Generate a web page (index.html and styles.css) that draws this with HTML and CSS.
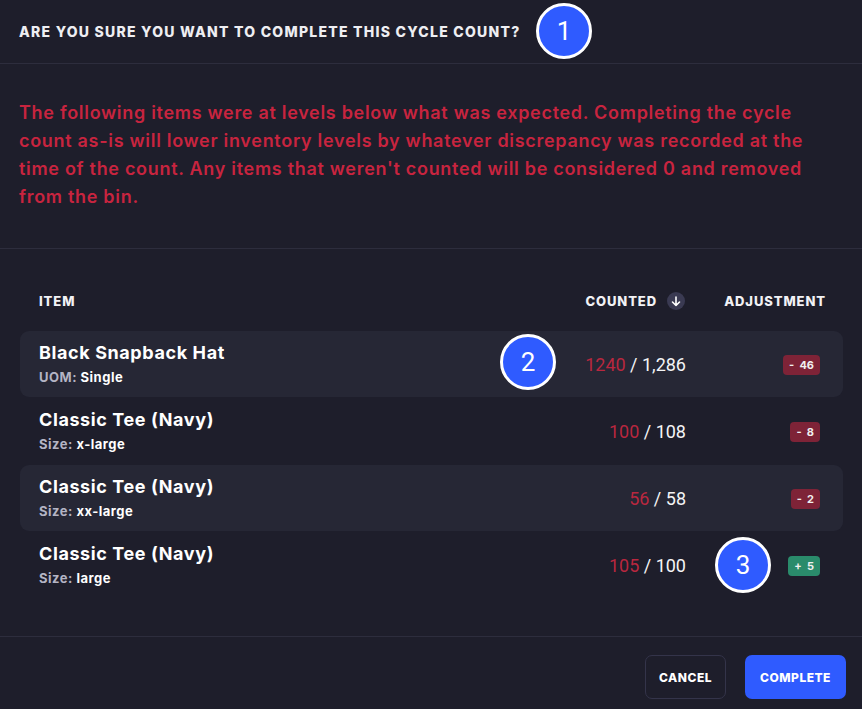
FILE: index.html
```html
<!DOCTYPE html>
<html>
<head>
<meta charset="utf-8">
<link rel="stylesheet" href="styles.css">
</head>
<body>
<div class="modal">
  <div class="header">
    <h1 class="title">Are you sure you want to complete this cycle count?</h1>
    <span class="marker m1">1</span>
  </div>
  <div class="warning">
    <p>The following items were at levels below what was expected. Completing the cycle count as-is will lower inventory levels by whatever discrepancy was recorded at the time of the count. Any items that weren't counted will be considered 0 and removed from the bin.</p>
  </div>
  <div class="table">
    <div class="thead">
      <div class="th item">Item</div>
      <div class="th counted">Counted <span class="sort"><svg width="10" height="11" viewBox="0 0 10 11"><path d="M5 1v8.5M1.5 6L5 9.5 8.5 6" fill="none" stroke="#fff" stroke-width="1.6" stroke-linecap="round" stroke-linejoin="round"/></svg></span></div>
      <div class="th adj">Adjustment</div>
    </div>
    <div class="row alt">
      <div class="item"><div class="name">Black Snapback Hat</div><div class="sub"><span class="lbl">UOM:</span> Single</div></div>
      <div class="counted"><span class="red">1240</span> / 1,286</div>
      <div class="adj"><span class="badge neg">-&nbsp; 46</span></div>
      <span class="marker m2">2</span>
    </div>
    <div class="row">
      <div class="item"><div class="name">Classic Tee (Navy)</div><div class="sub"><span class="lbl">Size:</span> x-large</div></div>
      <div class="counted"><span class="red">100</span> / 108</div>
      <div class="adj"><span class="badge neg">-&nbsp; 8</span></div>
    </div>
    <div class="row alt">
      <div class="item"><div class="name">Classic Tee (Navy)</div><div class="sub"><span class="lbl">Size:</span> xx-large</div></div>
      <div class="counted"><span class="red">56</span> / 58</div>
      <div class="adj"><span class="badge neg">-&nbsp; 2</span></div>
    </div>
    <div class="row">
      <div class="item"><div class="name">Classic Tee (Navy)</div><div class="sub"><span class="lbl">Size:</span> large</div></div>
      <div class="counted"><span class="red">105</span> / 100</div>
      <div class="adj"><span class="badge pos">+&nbsp; 5</span></div>
      <span class="marker m3">3</span>
    </div>
  </div>
  <div class="footer">
    <button class="btn cancel">Cancel</button>
    <button class="btn primary">Complete</button>
  </div>
</div>
</body>
</html>
```
FILE: styles.css
```css
* { box-sizing: border-box; }
html, body { margin: 0; padding: 0; }
body {
  background: #1e1e2b;
  color: #fff;
  font-family: "Inter", "Open Sans", "Liberation Sans", sans-serif;
  width: 862px;
  height: 709px;
  overflow: hidden;
}
.modal { position: relative; }
.header {
  position: relative;
  height: 64px;
  display: flex;
  align-items: center;
  padding: 0 19px;
  border-bottom: 1px solid #2d2d3d;
}
.title {
  margin: 0;
  font-size: 14px;
  font-weight: 800;
  text-transform: uppercase;
  letter-spacing: 1.25px;
  color: #eeeef2;
}
.marker {
  position: absolute;
  width: 56px;
  height: 56px;
  border-radius: 50%;
  background: #2f5bff;
  border: 3px solid #fff;
  color: #fff;
  font-family: "Roboto", "Liberation Sans", sans-serif;
  font-size: 26px;
  display: flex;
  align-items: center;
  justify-content: center;
  z-index: 2;
}
.m1 { left: 536px; top: 3px; }
.m2 { left: 480px; top: 3px; }
.m3 { left: 695px; top: 5px; }
.warning {
  padding: 35px 19px 37px;
  border-bottom: 1px solid #2d2d3d;
}
.warning p {
  margin: 0;
  color: #c8243f;
  font-size: 18px;
  font-weight: 600;
  line-height: 28px;
  letter-spacing: 0.7px;
  max-width: 816px;
}
.table { padding: 40px 19px 37px 20px; }
.thead {
  display: flex;
  align-items: center;
  height: 24px;
  margin-bottom: 18px;
  padding: 0 17px 0 19px;
}
.th {
  font-size: 13px;
  font-weight: 800;
  text-transform: uppercase;
  letter-spacing: 0.9px;
  color: #f2f2f5;
}
.thead .item { flex: 1; }
.thead .counted { display: flex; align-items: center; gap: 10px; }
.sort {
  width: 18px;
  height: 18px;
  border-radius: 50%;
  background: #3a3a52;
  display: flex;
  align-items: center;
  justify-content: center;
}
.thead .adj { width: 141px; text-align: right; }
.row {
  position: relative;
  height: 66px;
  margin-bottom: 1px;
  display: flex;
  align-items: center;
  padding: 0 23px 0 19px;
  border-radius: 9px;
}
.row.alt { background: #262735; }
.row .item { flex: 1; display: flex; flex-direction: column; gap: 4px; }
.name { font-size: 18px; font-weight: 700; line-height: 22px; letter-spacing: 0.6px; color: #fff; }
.sub { font-size: 13px; font-weight: 700; line-height: 18px; letter-spacing: 0.5px; color: #fff; }
.lbl { color: #b4b4c4; }
.row .counted {
  font-family: "Roboto", "Liberation Sans", sans-serif;
  font-size: 18px;
  font-weight: 400;
  color: #f4f4f6;
}
.red { color: #b9273f; }
.row .adj { width: 134px; text-align: right; }
.badge {
  display: inline-block;
  height: 20px;
  line-height: 20px;
  padding: 0 6px;
  border-radius: 4px;
  font-size: 11px;
  font-weight: 700;
  color: #f0f0f0;
}
.neg { background: #7e2337; }
.pos { background: #2a8b6b; }
.footer {
  border-top: 1px solid #2d2d3d;
  padding: 18px 16px 0;
  display: flex;
  justify-content: flex-end;
  gap: 19px;
}
.btn {
  height: 44px;
  border-radius: 7px;
  font-family: "Inter", "Open Sans", "Liberation Sans", sans-serif;
  font-size: 12px;
  font-weight: 800;
  letter-spacing: 0.5px;
  text-transform: uppercase;
  color: #fff;
  padding: 0;
  cursor: pointer;
}
.cancel { background: #1e1e2b; border: 1px solid #34344a; width: 81px; }
.primary { background: #2f5bff; border: none; width: 101px; }
```
